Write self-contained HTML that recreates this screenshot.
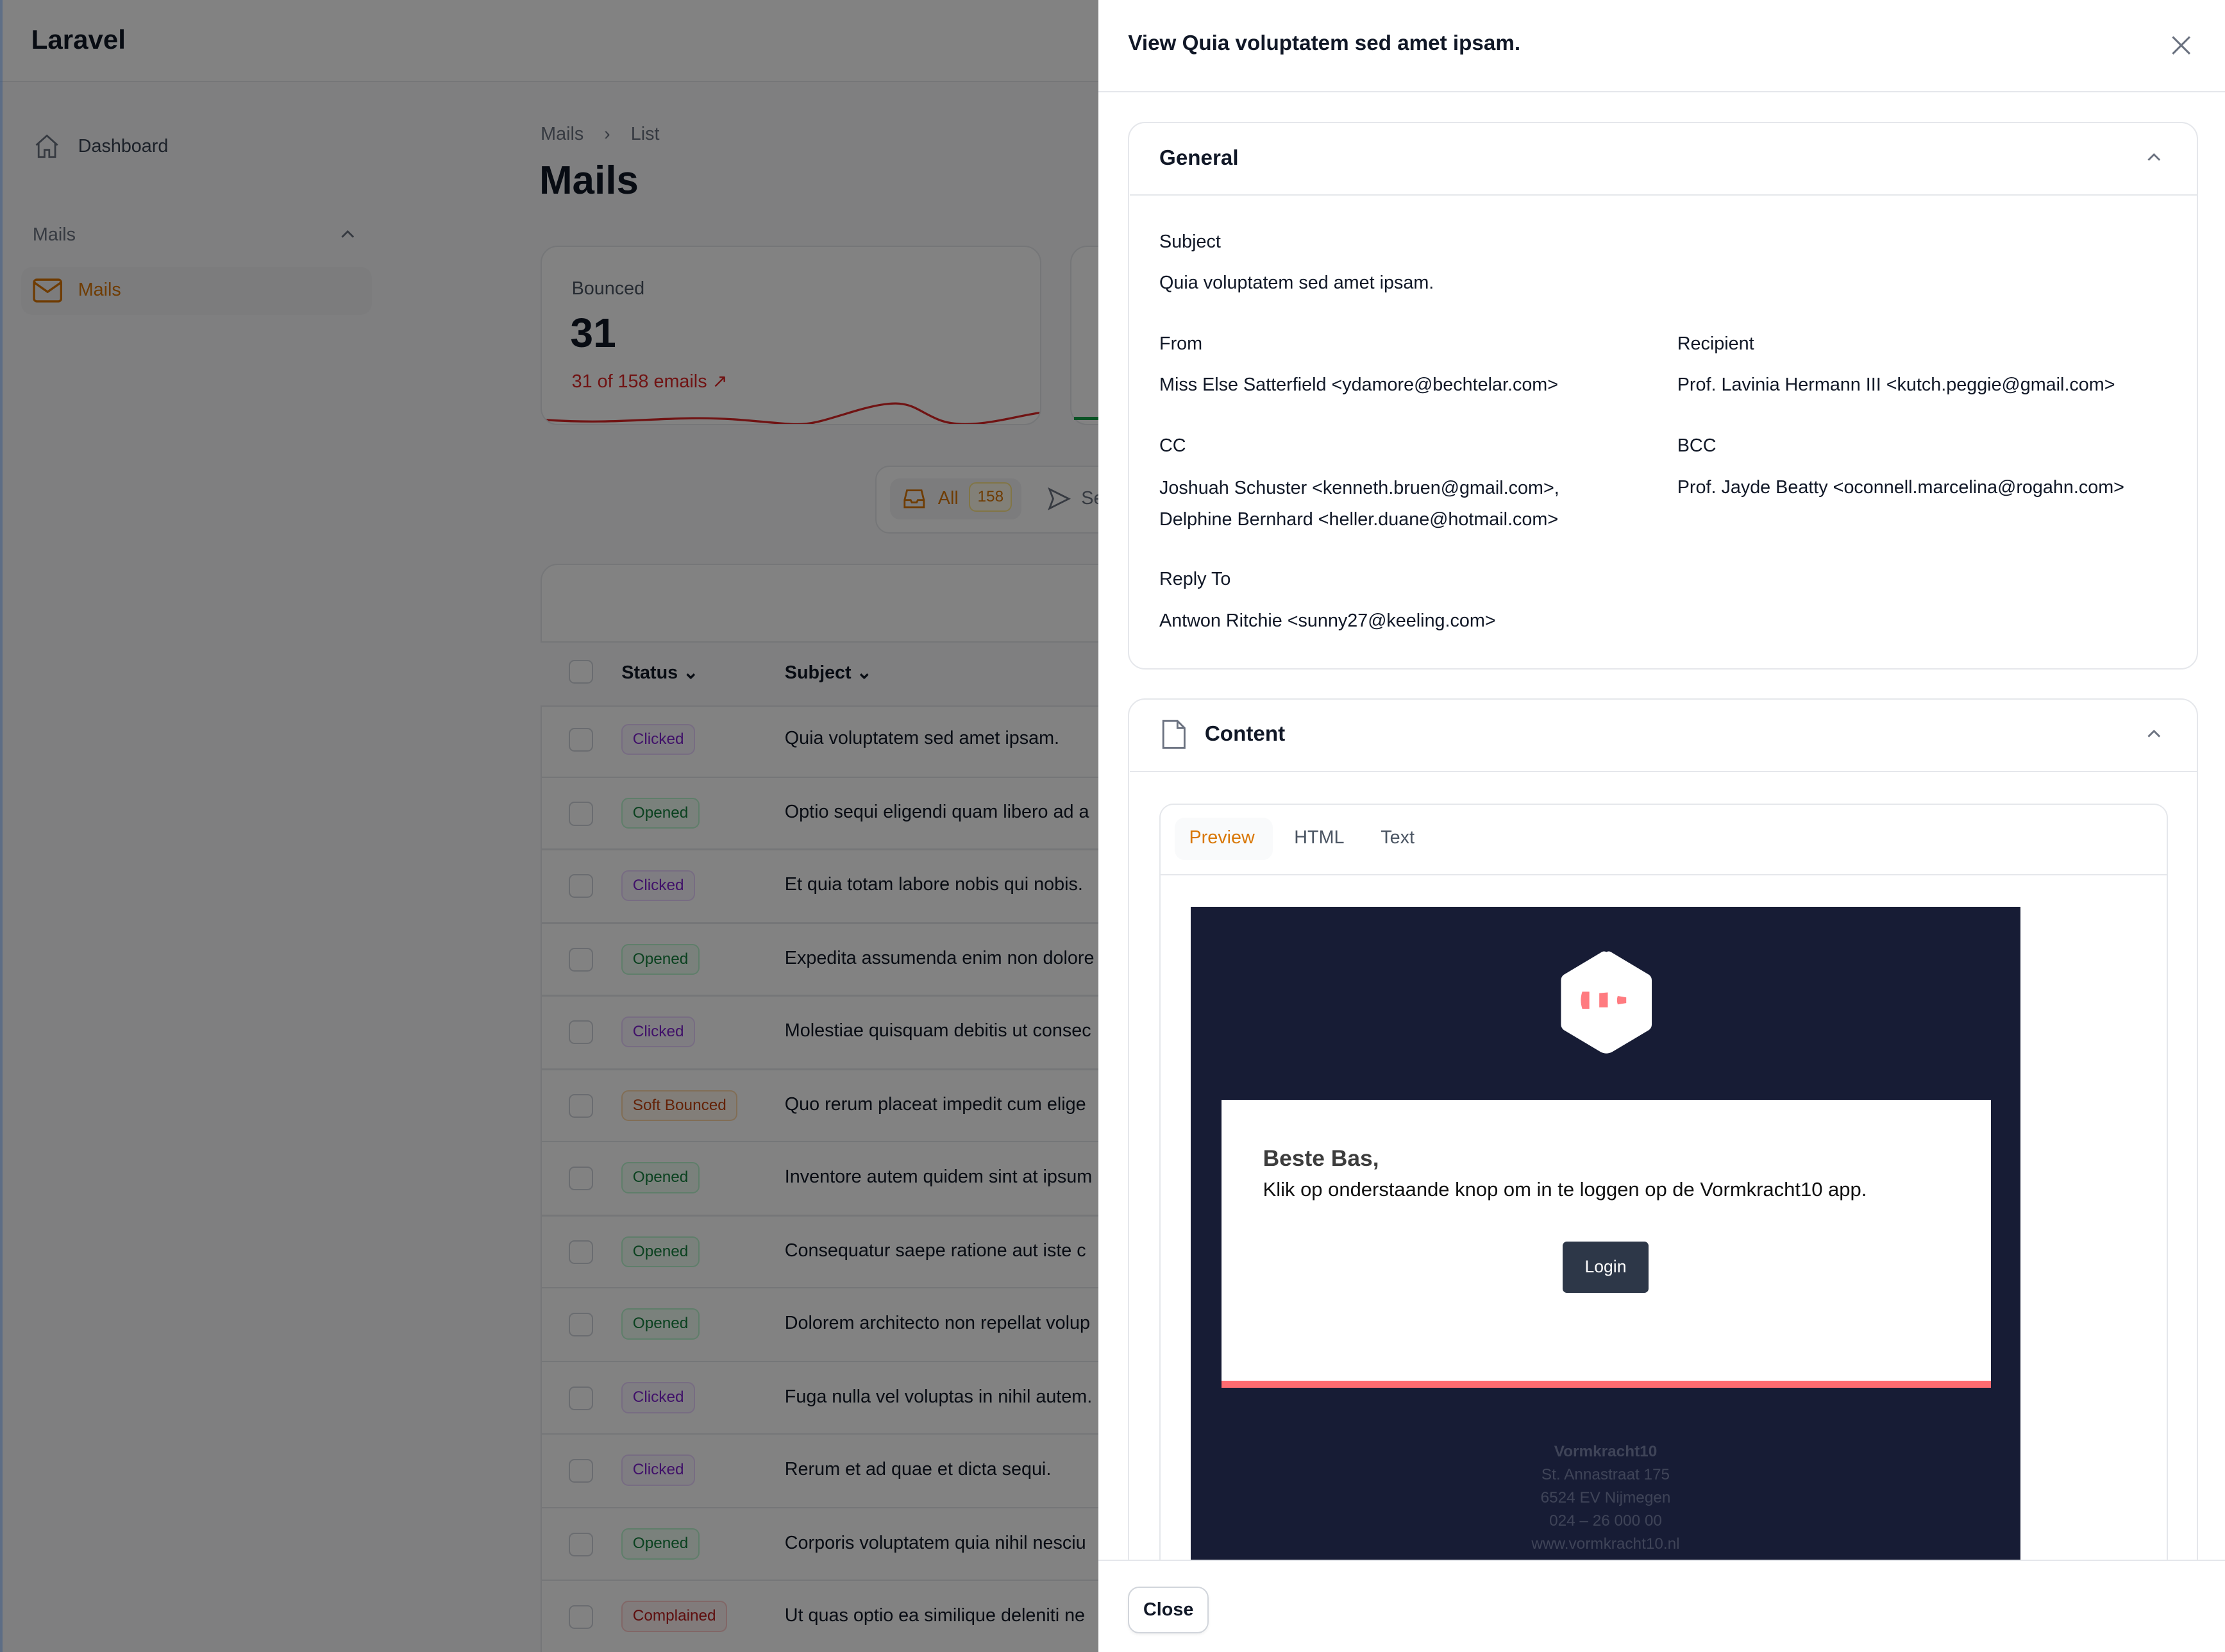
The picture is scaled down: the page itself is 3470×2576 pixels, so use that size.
<!DOCTYPE html>
<html><head><meta charset="utf-8">
<style>
html,body{margin:0;padding:0;overflow:hidden;background:#fff;}
body{width:3470px;height:2576px;}
#root{position:relative;width:1568px;height:1164px;zoom:2.2130;font-family:"Liberation Sans",sans-serif;color:#111827;overflow:hidden;background:#f9fafb;}
.a{position:absolute;}
.t{white-space:nowrap;}
.badge{position:absolute;left:438px;height:20px;line-height:20px;padding:0 7px;border-radius:5px;font-size:11px;border:1px solid;}
.cl{color:#7e22ce;background:#faf5ff;border-color:#e9d5ff;}
.op{color:#15803d;background:#f0fdf4;border-color:#bbf7d0;}
.sb{color:#c2410c;background:#fff7ed;border-color:#fed7aa;}
.cp{color:#b91c1c;background:#fef2f2;border-color:#fecaca;}
.cb{position:absolute;left:401px;width:15px;height:15px;border:1px solid #d1d5db;border-radius:4px;background:#fff;}
.subj{position:absolute;left:553px;font-size:13px;color:#111827;white-space:nowrap;}
.sep{position:absolute;left:381px;width:400px;height:1px;background:#e5e7eb;}
.lbl{position:absolute;font-size:13px;color:#111827;white-space:nowrap;}
.val{position:absolute;font-size:13px;color:#111827;white-space:nowrap;}
</style></head><body><div id="root">
<!-- underlying page -->
<div class="a" style="left:0;top:0;width:1568px;height:57px;background:#fff;border-bottom:1px solid #e5e7eb;"></div>
<div class="a t" style="left:22px;top:17px;font-size:19px;font-weight:bold;">Laravel</div>
<svg class="a" style="left:23px;top:93px" width="20" height="20" viewBox="0 0 24 24" fill="none" stroke="#6b7280" stroke-width="1.5"><path d="M3 11l9-8 9 8M5 9.5V21h5v-6h4v6h5V9.5"/></svg>
<div class="a t" style="left:55px;top:96px;font-size:13px;color:#374151;">Dashboard</div>
<div class="a t" style="left:23px;top:158px;font-size:13px;color:#6b7280;">Mails</div>
<svg class="a" style="left:239px;top:159px" width="12" height="12" viewBox="0 0 12 12" fill="none" stroke="#6b7280" stroke-width="1.3"><path d="M2 8l4-4 4 4"/></svg>
<div class="a" style="left:15px;top:188px;width:247px;height:34px;background:#f3f4f6;border-radius:8px;"></div>
<svg class="a" style="left:23px;top:195px" width="21" height="19" viewBox="0 0 22 18" fill="none" stroke="#d97706" stroke-width="1.6"><rect x="1" y="1" width="20" height="16" rx="2"/><path d="M1 3l10 7 10-7"/></svg>
<div class="a t" style="left:55px;top:197px;font-size:13px;color:#d97706;">Mails</div>
<div class="a t" style="left:381px;top:87px;font-size:13px;color:#6b7280;">Mails&nbsp;&nbsp;&nbsp;&nbsp;›&nbsp;&nbsp;&nbsp;&nbsp;List</div>
<div class="a t" style="left:380px;top:111px;font-size:28px;font-weight:bold;">Mails</div>
<div class="a" style="left:381px;top:173px;width:351px;height:125px;background:#fff;border:1px solid #e5e7eb;border-radius:12px;overflow:hidden;">
 <div class="a t" style="left:21px;top:22px;font-size:13px;color:#4b5563;">Bounced</div>
 <div class="a t" style="left:20px;top:44px;font-size:29px;font-weight:bold;">31</div>
 <div class="a t" style="left:21px;top:87px;font-size:13px;color:#dc2626;">31 of 158 emails ↗</div>
 <svg class="a" style="left:0;top:100px" width="351" height="25" viewBox="0 0 351 25"><path d="M2 22 C60 26 90 18 140 22 S 180 28 220 16 S 260 14 280 22 S 330 20 351 17" fill="none" stroke="#dc2626" stroke-width="1.5"/></svg>
</div>
<div class="a" style="left:754px;top:173px;width:351px;height:125px;background:#fff;border:1px solid #e5e7eb;border-radius:12px;"><div class="a" style="left:2px;top:120px;width:30px;height:2px;background:#16a34a"></div></div>
<div class="a" style="left:617px;top:328px;width:300px;height:46px;background:#fff;border:1px solid #e5e7eb;border-radius:10px;"></div>
<div class="a" style="left:627px;top:337px;width:93px;height:29px;background:#f3f4f6;border-radius:7px;"></div>
<svg class="a" style="left:636px;top:343px" width="17" height="17" viewBox="0 0 20 20" fill="none" stroke="#d97706" stroke-width="1.5"><path d="M2 11l2-8h12l2 8v6H2zM2 11h5l1 2h4l1-2h5"/></svg>
<div class="a t" style="left:661px;top:344px;font-size:13px;color:#d97706;">All</div>
<div class="a t" style="left:683px;top:340px;font-size:11px;color:#d97706;background:#fffbeb;border:1px solid #fde68a;border-radius:5px;padding:3px 5px;">158</div>
<svg class="a" style="left:738px;top:343px" width="17" height="17" viewBox="0 0 20 20" fill="none" stroke="#6b7280" stroke-width="1.5"><path d="M2 2l16 8-16 8 3-8z"/></svg>
<div class="a t" style="left:762px;top:344px;font-size:13px;color:#6b7280;">Se</div>
<div class="a" style="left:381px;top:397px;width:420px;height:800px;background:#fff;border:1px solid #e5e7eb;border-radius:12px;"></div>
<div class="a" style="left:381px;top:452px;width:420px;height:44px;background:#f9fafb;border-top:1px solid #e5e7eb;border-bottom:1px solid #e5e7eb;"></div>
<div class="cb" style="top:465px"></div>
<div class="a t" style="left:438px;top:466px;font-size:13px;font-weight:bold;">Status ⌄</div>
<div class="a t" style="left:553px;top:466px;font-size:13px;font-weight:bold;">Subject ⌄</div>
<!-- rows -->
<div class="cb" style="top:513px"></div><div class="badge cl" style="top:510px">Clicked</div><div class="subj" style="top:513px">Quia voluptatem sed amet ipsam.</div><div class="sep" style="top:547px"></div>
<div class="cb" style="top:565px"></div><div class="badge op" style="top:562px">Opened</div><div class="subj" style="top:565px">Optio sequi eligendi quam libero ad a</div><div class="sep" style="top:598px"></div>
<div class="cb" style="top:616px"></div><div class="badge cl" style="top:613px">Clicked</div><div class="subj" style="top:616px">Et quia totam labore nobis qui nobis.</div><div class="sep" style="top:650px"></div>
<div class="cb" style="top:668px"></div><div class="badge op" style="top:665px">Opened</div><div class="subj" style="top:668px">Expedita assumenda enim non dolore</div><div class="sep" style="top:701px"></div>
<div class="cb" style="top:719px"></div><div class="badge cl" style="top:716px">Clicked</div><div class="subj" style="top:719px">Molestiae quisquam debitis ut consec</div><div class="sep" style="top:753px"></div>
<div class="cb" style="top:771px"></div><div class="badge sb" style="top:768px">Soft Bounced</div><div class="subj" style="top:771px">Quo rerum placeat impedit cum elige</div><div class="sep" style="top:804px"></div>
<div class="cb" style="top:822px"></div><div class="badge op" style="top:819px">Opened</div><div class="subj" style="top:822px">Inventore autem quidem sint at ipsum</div><div class="sep" style="top:856px"></div>
<div class="cb" style="top:874px"></div><div class="badge op" style="top:871px">Opened</div><div class="subj" style="top:874px">Consequatur saepe ratione aut iste c</div><div class="sep" style="top:907px"></div>
<div class="cb" style="top:925px"></div><div class="badge op" style="top:922px">Opened</div><div class="subj" style="top:925px">Dolorem architecto non repellat volup</div><div class="sep" style="top:959px"></div>
<div class="cb" style="top:977px"></div><div class="badge cl" style="top:974px">Clicked</div><div class="subj" style="top:977px">Fuga nulla vel voluptas in nihil autem.</div><div class="sep" style="top:1010px"></div>
<div class="cb" style="top:1028px"></div><div class="badge cl" style="top:1025px">Clicked</div><div class="subj" style="top:1028px">Rerum et ad quae et dicta sequi.</div><div class="sep" style="top:1062px"></div>
<div class="cb" style="top:1080px"></div><div class="badge op" style="top:1077px">Opened</div><div class="subj" style="top:1080px">Corporis voluptatem quia nihil nesciu</div><div class="sep" style="top:1113px"></div>
<div class="cb" style="top:1131px"></div><div class="badge cp" style="top:1128px">Complained</div><div class="subj" style="top:1131px">Ut quas optio ea similique deleniti ne</div>
<!-- overlay -->
<div class="a" style="left:0;top:0;width:1568px;height:1164px;background:rgba(0,0,0,0.49);"></div>
<div class="a" style="left:0;top:0;width:2px;height:1164px;background:#3b5b8a;opacity:.5"></div>
<!-- modal -->
<div class="a" style="left:774px;top:0;width:794px;height:1164px;background:#fff;overflow:hidden;">
 <div class="a t" style="left:21px;top:22px;font-size:15px;font-weight:bold;">View Quia voluptatem sed amet ipsam.</div>
 <svg class="a" style="left:755px;top:24px" width="16" height="16" viewBox="0 0 16 16" stroke="#6b7280" stroke-width="1.4"><path d="M2 2l12 12M14 2L2 14"/></svg>
 <div class="a" style="left:0;top:64px;width:794px;height:1px;background:#e5e7eb;"></div>
 <!-- general -->
 <div class="a" style="left:21px;top:86px;width:752px;height:384px;border:1px solid #e5e7eb;border-radius:12px;"></div>
 <div class="a t" style="left:43px;top:103px;font-size:15px;font-weight:bold;">General</div>
 <svg class="a" style="left:738px;top:105px" width="12" height="12" viewBox="0 0 12 12" fill="none" stroke="#6b7280" stroke-width="1.3"><path d="M2 8l4-4 4 4"/></svg>
 <div class="a" style="left:22px;top:137px;width:752px;height:1px;background:#e5e7eb;"></div>
 <div class="lbl" style="left:43px;top:163px">Subject</div>
 <div class="val" style="left:43px;top:192px">Quia voluptatem sed amet ipsam.</div>
 <div class="lbl" style="left:43px;top:235px">From</div>
 <div class="val" style="left:43px;top:264px">Miss Else Satterfield &lt;ydamore@bechtelar.com&gt;</div>
 <div class="lbl" style="left:408px;top:235px">Recipient</div>
 <div class="val" style="left:408px;top:264px">Prof. Lavinia Hermann III &lt;kutch.peggie@gmail.com&gt;</div>
 <div class="lbl" style="left:43px;top:307px">CC</div>
 <div class="val" style="left:43px;top:336px;line-height:22px;top:333px">Joshuah Schuster &lt;kenneth.bruen@gmail.com&gt;,<br>Delphine Bernhard &lt;heller.duane@hotmail.com&gt;</div>
 <div class="lbl" style="left:408px;top:307px">BCC</div>
 <div class="val" style="left:408px;top:336px">Prof. Jayde Beatty &lt;oconnell.marcelina@rogahn.com&gt;</div>
 <div class="lbl" style="left:43px;top:401px">Reply To</div>
 <div class="val" style="left:43px;top:430px">Antwon Ritchie &lt;sunny27@keeling.com&gt;</div>
 <!-- content -->
 <div class="a" style="left:21px;top:492px;width:752px;height:700px;border:1px solid #e5e7eb;border-radius:12px;"></div>
 <svg class="a" style="left:45px;top:507px" width="17" height="21" viewBox="0 0 17 21" fill="none" stroke="#6b7280" stroke-width="1.3"><path d="M1 1h10l5 5v14H1zM11 1v5h5"/></svg>
 <div class="a t" style="left:75px;top:509px;font-size:15px;font-weight:bold;">Content</div>
 <svg class="a" style="left:738px;top:511px" width="12" height="12" viewBox="0 0 12 12" fill="none" stroke="#6b7280" stroke-width="1.3"><path d="M2 8l4-4 4 4"/></svg>
 <div class="a" style="left:22px;top:543px;width:752px;height:1px;background:#e5e7eb;"></div>
 <div class="a" style="left:43px;top:566px;width:709px;height:600px;border:1px solid #e5e7eb;border-radius:10px;"></div>
 <div class="a" style="left:54px;top:576px;width:69px;height:30px;background:#f9fafb;border-radius:7px;"></div>
 <div class="a t" style="left:64px;top:583px;font-size:13px;color:#d97706;">Preview</div>
 <div class="a t" style="left:138px;top:583px;font-size:13px;color:#4b5563;">HTML</div>
 <div class="a t" style="left:199px;top:583px;font-size:13px;color:#4b5563;">Text</div>
 <div class="a" style="left:44px;top:616px;width:709px;height:1px;background:#e5e7eb;"></div>
 <!-- email -->
 <div class="a" style="left:65px;top:639px;width:585px;height:480px;background:#171c35;">
  <svg class="a" style="left:259px;top:30px" width="68" height="75" viewBox="0 0 68 75"><path d="M34 2 Q36 1 38 2.5 L64 18 Q66 19.5 66 22 L66 53 Q66 55.5 64 57 L38 72.5 Q34 74.5 30 72.5 L4 57 Q2 55.5 2 53 L2 22 Q2 19.5 4 18 L30 2.5 Q32 1 34 2Z" fill="#fff"/><path d="M17 30 L22 30 L22 42 L17 42 Q15 36 17 30Z M29 31 L35 30.5 L35 41 L29 41Z M42 33 L48 34 L48 38 L42 39 Q41 36 42 33Z" fill="#ff7b80"/></svg>
  <div class="a" style="left:22px;top:136px;width:542px;height:198px;background:#fff;"></div>
  <div class="a" style="left:22px;top:334px;width:542px;height:5px;background:#ff6b70;"></div>
  <div class="a t" style="left:51px;top:168px;font-size:16px;font-weight:bold;color:#3d3d3d;">Beste Bas,</div>
  <div class="a t" style="left:51px;top:191px;font-size:14px;color:#111;">Klik op onderstaande knop om in te loggen op de Vormkracht10 app.</div>
  <div class="a t" style="left:262px;top:236px;width:61px;height:36px;line-height:36px;background:#2d3748;color:#fff;border-radius:3px;text-align:center;font-size:12px;">Login</div>
  <div class="a" style="left:0;top:376px;width:585px;text-align:center;font-size:11px;line-height:16.3px;color:#3f4458;"><b>Vormkracht10</b><br>St. Annastraat 175<br>6524 EV Nijmegen<br>024 – 26 000 00<br>www.vormkracht10.nl</div>
 </div>
 <div class="a" style="left:0;top:1099px;width:794px;height:65px;background:#fff;border-top:1px solid #e5e7eb;"></div>
 <div class="a t" style="left:21px;top:1118px;width:55px;height:31px;line-height:31px;text-align:center;border:1px solid #d1d5db;border-radius:8px;font-size:13px;font-weight:bold;box-shadow:0 1px 2px rgba(0,0,0,.05);">Close</div>
</div>
</div></body></html>
